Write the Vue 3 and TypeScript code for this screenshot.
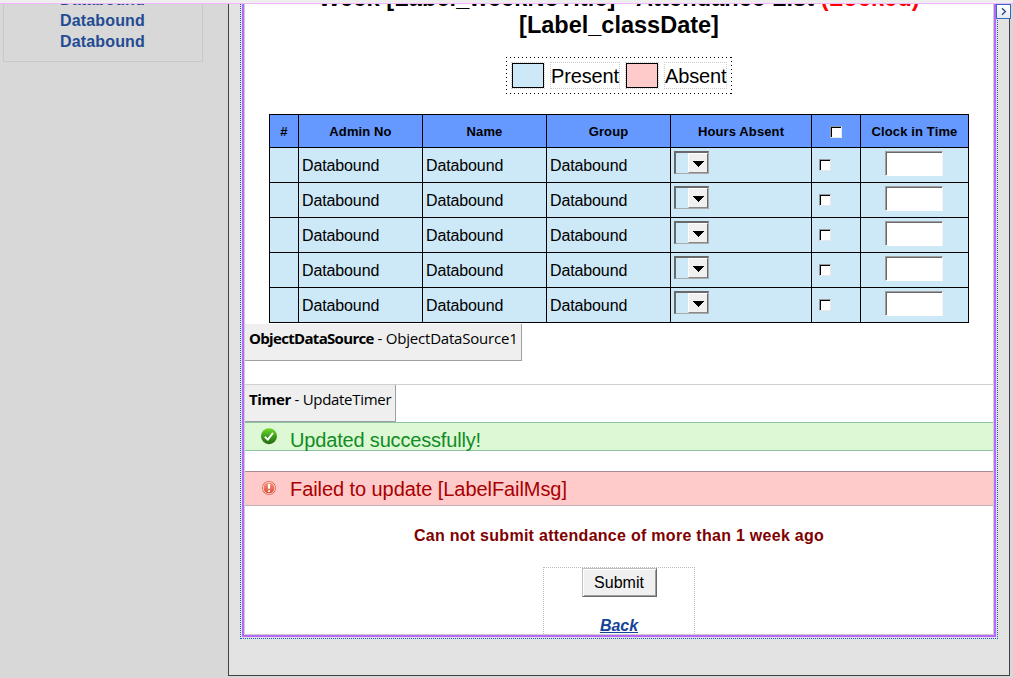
<script setup lang="ts">
interface HeaderCell {
  label: string
  checkbox?: boolean
}

const headers: HeaderCell[] = [
  { label: '#' },
  { label: 'Admin No' },
  { label: 'Name' },
  { label: 'Group' },
  { label: 'Hours Absent' },
  { label: '', checkbox: true },
  { label: 'Clock in Time' },
]
const rows: number[] = [1, 2, 3, 4, 5]
const sideItems: string[] = ['Databound', 'Databound', 'Databound']
</script>

<template>
  <div class="page">
    <div class="strip"></div>
    <div class="workspace">
      <aside class="sidebar">
        <div class="side-box">
          <div v-for="(item, i) in sideItems" :key="i" class="side-item"><span>{{ item }}</span></div>
        </div>
      </aside>
      <main class="canvas">
        <div class="outer">
          <div class="purple">
            <div class="content">
              <h1 class="title">
                <span class="l1">Week [Label_weekNoTitle] - Attendance List <span class="locked">(Locked)</span></span>
                <span class="l2">[Label_classDate]</span>
              </h1>

              <div class="legend">
                <span class="swatch present"></span>
                <span class="key key-present">Present</span>
                <span class="swatch absent"></span>
                <span class="key key-absent">Absent</span>
              </div>

              <div class="grid">
                <div v-for="(h, i) in headers" :key="'h' + i" class="cell head">
                  <span v-if="h.checkbox" class="check"></span>
                  <span v-else>{{ h.label }}</span>
                </div>
                <template v-for="r in rows" :key="r">
                  <div class="cell"></div>
                  <div class="cell"><span>Databound</span></div>
                  <div class="cell"><span>Databound</span></div>
                  <div class="cell"><span>Databound</span></div>
                  <div class="cell top">
                    <span class="select">
                      <span class="drop">
                        <svg width="12" height="6" viewBox="0 0 12 6" shape-rendering="crispEdges"><path d="M0 0H12L6 6Z" fill="#000" /></svg>
                      </span>
                    </span>
                  </div>
                  <div class="cell chk"><span class="check"></span></div>
                  <div class="cell top clock"><span class="field"></span></div>
                </template>
              </div>

              <div class="source ods"><b>ObjectDataSource</b><span>&nbsp;- ObjectDataSource1</span></div>
              <div class="panel">
                <div class="source timer"><b>Timer</b><span>&nbsp;- UpdateTimer</span></div>
              </div>

              <div class="msg ok">
                <svg class="icon" width="17" height="17" viewBox="0 0 17 17">
                  <defs>
                    <linearGradient id="okFill" x1="0" y1="0" x2="0" y2="1">
                      <stop offset="0" stop-color="#6fdc2c" />
                      <stop offset="0.5" stop-color="#3f9e1d" />
                      <stop offset="1" stop-color="#23690f" />
                    </linearGradient>
                  </defs>
                  <circle cx="8" cy="8.2" r="8" fill="url(#okFill)" />
                  <path d="M3.8 8.8L6.8 11.6L12 4.8" fill="none" stroke="#fff" stroke-width="1.9" />
                </svg>
                <span class="text">Updated successfully!</span>
              </div>
              <div class="msg fail">
                <svg class="icon" width="16" height="16" viewBox="0 0 16 16">
                  <defs>
                    <linearGradient id="failFill" x1="0" y1="0" x2="0" y2="1">
                      <stop offset="0" stop-color="#f59a86" />
                      <stop offset="1" stop-color="#dc4b34" />
                    </linearGradient>
                  </defs>
                  <circle cx="8" cy="8" r="7" fill="#e46a57" />
                  <circle cx="8" cy="8" r="5.8" fill="url(#failFill)" stroke="#ffd0c6" stroke-width="0.9" />
                  <path d="M8 4V8.8M8 10.2V12" stroke="#fff" stroke-width="2" />
                </svg>
                <span class="text">Failed to update [LabelFailMsg]</span>
              </div>

              <div class="warning"><span>Can not submit attendance of more than 1 week ago</span></div>

              <div class="actions">
                <button type="button" class="submit">Submit</button>
                <a class="back">Back</a>
              </div>
            </div>
          </div>
        </div>
        <span class="smart-tag">
          <svg width="13" height="13" viewBox="0 0 13 13"><path d="M5 3.2L8.4 6.5L5 9.8" fill="none" stroke="#24468c" stroke-width="1.3" /></svg>
        </span>
      </main>
    </div>
  </div>
</template>

<style>
body {
  margin: 0;
  overflow: hidden;
}
</style>

<style scoped>
* {
  box-sizing: border-box;
}
.page {
  width: 1013px;
  height: 678px;
  display: flex;
  flex-direction: column;
  overflow: hidden;
  background: #d8d8d8;
  font-family: "Liberation Sans", Arial, sans-serif;
  color: #000;
  white-space: nowrap;
}
.strip {
  flex: none;
  height: 4px;
  background: #eee;
  border-bottom: 1px solid #f0b8fa;
}
.workspace {
  display: flex;
  height: 674px;
}
.sidebar {
  width: 228px;
  padding-left: 3px;
}
.side-box {
  width: 200px;
  height: 58px;
  border: 1px solid #c8c8c8;
  border-top: 0;
  overflow: hidden;
  display: flex;
  flex-direction: column;
  justify-content: flex-end;
  padding-bottom: 9px;
}
.side-item {
  flex: none;
  height: 21px;
  line-height: 21px;
  padding-right: 1px;
  text-align: center;
  font-size: 16px;
  letter-spacing: 0.15px;
  font-weight: bold;
  color: #234b93;
}
.canvas {
  position: relative;
  width: 782px;
  height: 672px;
  padding-left: 11px;
  background: #e3e3e3;
  border: solid #424242;
  border-width: 0 1px 1px;
}
.smart-tag {
  position: absolute;
  top: 0;
  right: -2px;
  width: 15px;
  height: 15px;
  display: flex;
  background: linear-gradient(#fff, #e6eaf0);
  border: 1px solid #316ac5;
}
.outer {
  width: 758px;
  height: 635px;
  padding: 0 1px 1px;
  border: 1px dotted #1c5fc0;
  border-top: 0;
}
.purple {
  height: 633px;
  border: solid #b669fb;
  border-width: 0 2px 2px;
}
.content {
  height: 631px;
  background: #fff;
  border: 1px solid #cfcfcf;
  border-top: 0;
  overflow: hidden;
}
.title {
  margin: 0;
  height: 53px;
  display: flex;
  flex-direction: column;
  align-items: center;
  font-size: 23.5px;
  line-height: 27px;
}
.l1 {
  margin-top: -19px;
  letter-spacing: 0.13px;
}
.locked {
  color: #f00;
}
.legend {
  width: 226px;
  height: 37px;
  margin-left: 261px;
  display: flex;
  padding: 6px 0 0 6px;
  font-size: 20px;
  background:
    repeating-linear-gradient(90deg, #000 0 1px, transparent 1px 4px) 0 0 / 100% 1px no-repeat,
    repeating-linear-gradient(90deg, #000 0 1px, transparent 1px 4px) 0 100% / 100% 1px no-repeat,
    repeating-linear-gradient(180deg, #000 0 1px, transparent 1px 4px) 0 0 / 1px 100% no-repeat,
    repeating-linear-gradient(180deg, #000 0 1px, transparent 1px 4px) 100% 0 / 1px 100% no-repeat;
}
.swatch {
  width: 32px;
  height: 25px;
  border: 1px solid #000;
  outline: 1px dotted #c8c8c8;
}
.present {
  background: #cde8f7;
}
.absent {
  background: #fecaca;
}
.key {
  height: 27px;
  margin-top: -1px;
  line-height: 26px;
  letter-spacing: -0.15px;
  border: 1px dotted #ccc;
}
.key-present {
  width: 70px;
  margin-left: 6px;
  margin-right: 6px;
}
.key-absent {
  width: 63px;
  margin-left: 6px;
}
.grid {
  width: 700px;
  height: 209px;
  margin: 20px 0 0 24px;
  display: grid;
  grid-template-columns: 29px 124px 124px 124px 141px 49px 108px;
  grid-template-rows: 33px repeat(5, 35px);
  border: solid #000;
  border-width: 1px 0 0 1px;
  background: #cde8f7;
}
.cell {
  display: flex;
  align-items: center;
  padding: 2px 0 0 3px;
  font-size: 16px;
  letter-spacing: -0.12px;
  border: solid #000;
  border-width: 0 1px 1px 0;
}
.head {
  justify-content: center;
  padding: 1px 0 0;
  background: #6699ff;
  font-size: 13px;
  font-weight: bold;
  letter-spacing: 0.12px;
}
.cell.top {
  align-items: flex-start;
  padding-top: 3px;
}
.select {
  width: 35px;
  height: 23px;
  display: flex;
  justify-content: flex-end;
  border: 2px solid;
  border-color: #696969 #aaa #aaa #696969;
  border-width: 2px 1px 1px 2px;
}
.drop {
  width: 20px;
  height: 20px;
  display: flex;
  align-items: center;
  justify-content: center;
  padding-top: 1px;
  background: #f0f0f0;
  border: 1px solid;
  border-color: #fff #696969 #888 #fff;
}
.cell.chk {
  padding: 0 0 0 7px;
}
.check {
  width: 12px;
  height: 12px;
  background: #fff;
  border: 1px solid;
  border-color: #999 #e8e8e8 #e8e8e8 #999;
  box-shadow: inset 1px 1px #000;
}
.cell.clock {
  padding-left: 24px;
}
.field {
  width: 58px;
  height: 25px;
  background: #fff;
  border: 1px solid;
  border-color: #a0a0a0 #f4f4f4 #fff #a0a0a0;
  box-shadow: inset 1px 1px #696969;
}
.source {
  height: 37px;
  padding: 0 0 0 4px;
  background: #efefef;
  border: solid #a0a0a0;
  border-width: 0 1px 1px 0;
  font-family: "Open Sans", "Noto Sans", sans-serif;
  font-size: 15px;
  line-height: 28px;
  letter-spacing: -0.3px;
}
.ods {
  width: 277px;
  margin-top: 1px;
}
.ods b {
  letter-spacing: -0.68px;
}
.ods span {
  letter-spacing: -0.2px;
}
.panel {
  margin-top: 23px;
  border-top: 1px solid #d0d0d0;
}
.timer {
  width: 151px;
}
.timer b {
  letter-spacing: -0.35px;
}
.msg {
  display: flex;
  border: solid;
  border-width: 1px 0;
  font-size: 20px;
}
.ok {
  height: 29px;
  background: #dcf8d5;
  border-color: #8dc3a0;
  color: #118c24;
}
.fail {
  height: 35px;
  margin-top: 20px;
  background: #ffcaca;
  border-color: #a88a90 transparent #bdb0b7;
  color: #a80000;
}
.ok .icon {
  margin: 5px 0 0 16px;
}
.ok .text {
  margin: 5px 0 0 12px;
  line-height: 24px;
  letter-spacing: -0.17px;
}
.fail .icon {
  margin: 8px 0 0 16px;
}
.fail .text {
  margin: 5px 0 0 13px;
  line-height: 24px;
  letter-spacing: -0.07px;
}
.warning {
  height: 61px;
  line-height: 60px;
  text-align: center;
  font-size: 16px;
  letter-spacing: 0.28px;
  font-weight: bold;
  color: #800000;
}
.actions {
  width: 152px;
  height: 67px;
  margin-left: 298px;
  display: flex;
  flex-direction: column;
  align-items: center;
  border: 1px dotted #bbb;
  border-bottom: 0;
}
.submit {
  flex: none;
  width: 75px;
  height: 29px;
  padding: 1px 0 0;
  font: 16px "Liberation Sans", Arial, sans-serif;
  color: #000;
  background: #f0f0f0;
  border: 1px solid;
  border-color: #c0c0c0 #696969 #696969 #c0c0c0;
  border-radius: 0;
  box-shadow: inset 1px 1px #fff, inset -1px -1px #a0a0a0;
}
.back {
  flex: none;
  margin-top: 19px;
  font-size: 16px;
  line-height: 20px;
  font-weight: bold;
  font-style: italic;
  color: #144397;
  text-decoration: underline;
}
</style>
